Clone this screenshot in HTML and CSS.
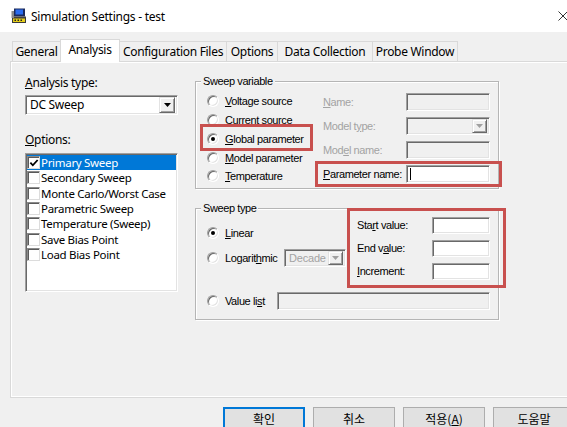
FILE: index.html
```html
<!DOCTYPE html>
<html>
<head>
<meta charset="utf-8">
<link rel="stylesheet" href="styles.css">
</head>
<body>
<div class="titlebar">
  <svg class="app-icon" viewBox="0 0 16 16">
    <rect x="3" y="0.5" width="11" height="8" fill="#1b2a5c"/>
    <rect x="4.5" y="1.5" width="7.5" height="5" fill="#2a6cf0"/>
    <rect x="1" y="8.5" width="14" height="1.5" fill="#4a4a4a"/>
    <rect x="1.5" y="10" width="13" height="4.5" fill="#e6cf1a" stroke="#3a3a3a" stroke-width="1"/>
    <rect x="3.5" y="11.5" width="1.5" height="1.5" fill="#222"/>
    <rect x="6.5" y="11.5" width="1.5" height="1.5" fill="#222"/>
    <rect x="9.5" y="11.5" width="1.5" height="1.5" fill="#222"/>
    <rect x="0.5" y="3" width="2.5" height="7" fill="#8a8a8a"/>
  </svg>
  <span class="title">Simulation Settings - test</span>
  <svg class="close" viewBox="0 0 10 10"><path d="M0.5 0.5L9.5 9.5M9.5 0.5L0.5 9.5" stroke="#333" stroke-width="1" fill="none"/></svg>
</div>

<div class="tabs">
  <div class="tab t-general">General</div>
  <div class="tab t-analysis active">Analysis</div>
  <div class="tab t-config">Configuration Files</div>
  <div class="tab t-options">Options</div>
  <div class="tab t-data">Data Collection</div>
  <div class="tab t-probe">Probe Window</div>
</div>

<div class="page">
  <div class="col-left">
    <div class="lbl"><u>A</u>nalysis type:</div>
    <div class="combo combo-type">
      <span class="combo-text">DC Sweep</span>
      <span class="drop"><svg viewBox="0 0 7 4"><path d="M0 0H7L3.5 4Z" fill="#000"/></svg></span>
    </div>
    <div class="lbl lbl-options"><u>O</u>ptions:</div>
    <ul class="list">
      <li class="item selected"><span class="check"><svg viewBox="0 0 11 11"><path d="M1.5 5.2L4.2 8L9.5 2.2" stroke="#000" stroke-width="2" fill="none"/></svg></span>Primary Sweep</li>
      <li class="item"><span class="check"></span>Secondary Sweep</li>
      <li class="item"><span class="check"></span>Monte Carlo/Worst Case</li>
      <li class="item"><span class="check"></span>Parametric Sweep</li>
      <li class="item"><span class="check"></span>Temperature (Sweep)</li>
      <li class="item"><span class="check"></span>Save Bias Point</li>
      <li class="item"><span class="check"></span>Load Bias Point</li>
    </ul>
  </div>

  <div class="col-right">
    <div class="group group-var">
      <div class="legend">Sweep variable</div>
      <div class="var-body">
        <div class="radios">
          <div class="radio-row"><span class="radio"></span><span><u>V</u>oltage source</span></div>
          <div class="radio-row"><span class="radio"></span><span><u>C</u>urrent source</span></div>
          <div class="radio-row hl-global"><span class="radio on"></span><span><u>G</u>lobal parameter</span></div>
          <div class="radio-row"><span class="radio"></span><span><u>M</u>odel parameter</span></div>
          <div class="radio-row"><span class="radio"></span><span><u>T</u>emperature</span></div>
        </div>
        <div class="fields">
          <div class="field"><span class="flabel dis"><u>N</u>ame:</span><span class="edit dis"></span></div>
          <div class="field"><span class="flabel dis">Model t<u>y</u>pe:</span><span class="edit dis edit-combo"><span class="drop small"><svg viewBox="0 0 7 4"><path d="M0 0H7L3.5 4Z" fill="#a0a0a0"/></svg></span></span></div>
          <div class="field"><span class="flabel dis">Mod<u>e</u>l name:</span><span class="edit dis"></span></div>
          <div class="field hl-param"><span class="flabel"><u>P</u>arameter name:</span><span class="edit"><span class="caret"></span></span></div>
        </div>
      </div>
    </div>

    <div class="group group-type">
      <div class="legend">Sweep type</div>
      <div class="type-body">
        <div class="type-left">
          <div class="radio-row"><span class="radio on"></span><span><u>L</u>inear</span></div>
          <div class="radio-row log-row">
            <span class="radio"></span><span class="log-label">Logarit<u>h</u>mic</span>
            <span class="combo combo-decade dis"><span class="combo-text">Decade</span><span class="drop small"><svg viewBox="0 0 7 4"><path d="M0 0H7L3.5 4Z" fill="#a0a0a0"/></svg></span></span>
          </div>
        </div>
        <div class="range">
          <span class="rlabel">Sta<u>r</u>t value:</span><span class="edit redit"></span>
          <span class="rlabel">End v<u>a</u>lue:</span><span class="edit redit"></span>
          <span class="rlabel"><u>I</u>ncrement:</span><span class="edit redit"></span>
        </div>
        <div class="radio-row vlist-row">
          <span class="radio"></span><span class="vlist-label">Value li<u>s</u>t</span>
          <span class="edit dis vlist-edit"></span>
        </div>
      </div>
    </div>
  </div>
</div>

<div class="buttons">
  <button class="btn default">확인</button>
  <button class="btn">취소</button>
  <button class="btn">적용(<u>A</u>)</button>
  <button class="btn">도움말</button>
</div>
</body>
</html>
```

FILE: styles.css
```css
* { box-sizing: border-box; }
html, body { margin: 0; padding: 0; }
body {
  width: 567px;
  height: 427px;
  overflow: hidden;
  background: #f0f0f0;
  font-family: "Noto Sans", sans-serif;
  font-size: 12px;
  color: #000;
}

/* title bar */
.titlebar {
  height: 32px;
  background: #fff;
  display: flex;
  align-items: center;
  padding-left: 11px;
}
.app-icon { width: 16px; height: 16px; flex: none; }
.title { margin-left: 4px; font-size: 12px; letter-spacing: -0.25px; }
.close { width: 10px; height: 10px; margin-left: auto; margin-right: -1px; flex: none; }

/* tabs */
.tabs {
  height: 30px;
  margin-bottom: -1px;
  display: flex;
  align-items: flex-end;
  padding-left: 13px;
  position: relative;
  z-index: 1;
}
.tab {
  height: 20px;
  margin-bottom: 1px;
  margin-left: -1px;
  border: 1px solid #d9d9d9;
  border-bottom: none;
  background: #f0f0f0;
  display: flex;
  align-items: center;
  justify-content: center;
  font-size: 12px;
  letter-spacing: -0.3px;
  flex: none;
}
.tab.active { height: 23px; margin-bottom: 0; background: #fff; position: relative; z-index: 2; padding-bottom: 3px; }
.t-general { width: 49px; }
.t-analysis { width: 60px; }
.t-config { width: 108px; }
.t-options { width: 52px; }
.t-data { width: 96px; }
.t-probe { width: 86px; }

/* page */
.page {
  width: 570px;
  height: 337px;
  margin-left: 10px;
  border: 1px solid #d9d9d9;
  box-shadow: inset 1px 1px 0 #fff, inset -1px -1px 0 #fff;
  display: grid;
  grid-template-columns: 153px 304px;
  column-gap: 17px;
  align-items: start;
  padding: 13px 0 0 14px;
}

/* left column */
.lbl { height: 16px; line-height: 16px; letter-spacing: -0.3px; }
.lbl-options { margin-top: 17px; }

.combo {
  display: flex;
  align-items: center;
  background: #fff;
  border: 1px solid;
  border-color: #a0a0a0 #fff #fff #a0a0a0;
  box-shadow: inset 1px 1px 0 #696969, inset -1px -1px 0 #e3e3e3;
  padding: 2px;
}
.combo-type { margin-top: 4px; height: 20px; }
.combo-text { flex: 1; padding-left: 2px; letter-spacing: -0.3px; line-height: 14px; }
.drop {
  width: 16px;
  height: 16px;
  flex: none;
  background: #f0f0f0;
  border: 1px solid;
  border-color: #e3e3e3 #696969 #696969 #e3e3e3;
  box-shadow: inset 1px 1px 0 #fff, inset -1px -1px 0 #a0a0a0;
  display: flex;
  align-items: center;
  justify-content: center;
}
.drop svg { width: 7px; height: 4px; }
.drop.small { width: 15px; height: 14px; }

.list {
  list-style: none;
  margin: 5px 0 0;
  padding: 1px;
  height: 139px;
  background: #fff;
  border: 1px solid;
  border-color: #a0a0a0 #fff #fff #a0a0a0;
  box-shadow: inset 1px 1px 0 #696969, inset -1px -1px 0 #e3e3e3;
}
.item {
  height: 15.3px;
  line-height: 15px;
  display: flex;
  align-items: center;
  white-space: nowrap;
  letter-spacing: -0.3px;
  font-size: 11.5px;
}
.item.selected { background: #0078d7; color: #fff; }
.check {
  width: 13px;
  height: 13px;
  flex: none;
  margin-right: 1px;
  background: #fff;
  border: 1px solid;
  border-color: #8a8a8a #dcdcdc #dcdcdc #8a8a8a;
  box-shadow: inset 1px 1px 0 #5a5a5a;
  display: flex;
  align-items: center;
  justify-content: center;
}
.check svg { width: 10px; height: 10px; }

/* right column */
.col-right { font-family: "Liberation Sans", Arial, sans-serif; font-size: 11px; letter-spacing: -0.4px; }
.group {
  border: 1px solid #b5b5b5;
  box-shadow: 1px 1px 0 #fff, inset 1px 1px 0 #fff;
}
.group-var { margin-top: 6px; }
.group-type { margin-top: 19px; }
.legend {
  width: max-content;
  margin: -7px 0 -5px 5px;
  padding: 0 2px;
  line-height: 12px;
  background: #f0f0f0;
  position: relative;
}

.var-body { display: flex; padding: 10px 0 2px 11px; }
.radios { width: 116px; flex: none; }
.radio-row { height: 18.75px; display: flex; align-items: center; white-space: nowrap; }
.radio {
  width: 12px;
  height: 12px;
  flex: none;
  margin-right: 6px;
  border-radius: 50%;
  background: #fff;
  border: 1px solid;
  border-color: #a0a0a0 #fff #fff #a0a0a0;
  box-shadow: inset 1px 1px 0 #696969, inset -1px -1px 0 #e3e3e3;
  display: flex;
  align-items: center;
  justify-content: center;
}
.radio.on::after {
  content: "";
  width: 4px;
  height: 4px;
  border-radius: 50%;
  background: #000;
}
.hl-global {
  width: max-content;
  height: 21.75px;
  margin: -3px -6px 0 -4px;
  padding: 3px 6px 0 4px;
  outline: 3px solid #c8504e;
}

.fields { margin-top: 1px; display: flex; flex-direction: column; gap: 6px; }
.field { display: flex; align-items: center; height: 18px; }
.flabel { width: 83px; flex: none; white-space: nowrap; }
.flabel.dis { color: #a3a3a3; }
.edit {
  width: 84px;
  height: 18px;
  flex: none;
  background: #fff;
  border: 1px solid;
  border-color: #a0a0a0 #fff #fff #a0a0a0;
  box-shadow: inset 1px 1px 0 #696969, inset -1px -1px 0 #e3e3e3;
  display: flex;
  align-items: center;
  padding: 2px;
}
.edit.dis { background: #f0f0f0; }
.edit-combo { justify-content: flex-end; }
.caret { width: 1px; height: 12px; background: #000; margin-left: 1px; }
.hl-param {
  height: 20px;
  margin: -1px -9px -1px -5px;
  padding: 1px 9px 1px 5px;
  outline: 3px solid #c8504e;
}

.type-body { display: grid; grid-template-columns: 154px 1fr; padding-bottom: 9px; }
.type-left { padding: 14.6px 0 0 11px; }
.log-row { margin-top: 6.6px; height: 18px; }
.log-label { width: 59px; flex: none; }
.combo-decade {
  width: 62px;
  height: 18px;
  background: #f0f0f0;
  color: #a3a3a3;
  padding: 2px;
}
.combo-decade .combo-text { padding-left: 2px; letter-spacing: -0.2px; }

.range {
  align-self: start;
  margin: 2px -5px 0 0;
  padding: 6px 13px 5px 7px;
  outline: 3px solid #c8504e;
  display: grid;
  grid-template-columns: 75px 58px;
  grid-auto-rows: 17px;
  row-gap: 6px;
  align-items: center;
}
.redit { width: 58px; height: 17px; }

.vlist-row { grid-column: 1 / -1; margin-top: 7px; height: 18px; padding-left: 11px; }
.vlist-label { width: 52px; flex: none; }
.vlist-edit { width: 213px; }

/* buttons */
.buttons { display: flex; gap: 8px; padding-left: 223px; margin-top: 9px; }
.btn {
  width: 82px;
  height: 23px;
  flex: none;
  background: #e1e1e1;
  border: 1px solid #adadad;
  font-family: "Noto Sans CJK KR", "Noto Sans", sans-serif;
  font-size: 12px;
  color: #000;
  padding: 0;
  line-height: 20px;
}
.btn.default { border: 2px solid #0078d7; }
```
